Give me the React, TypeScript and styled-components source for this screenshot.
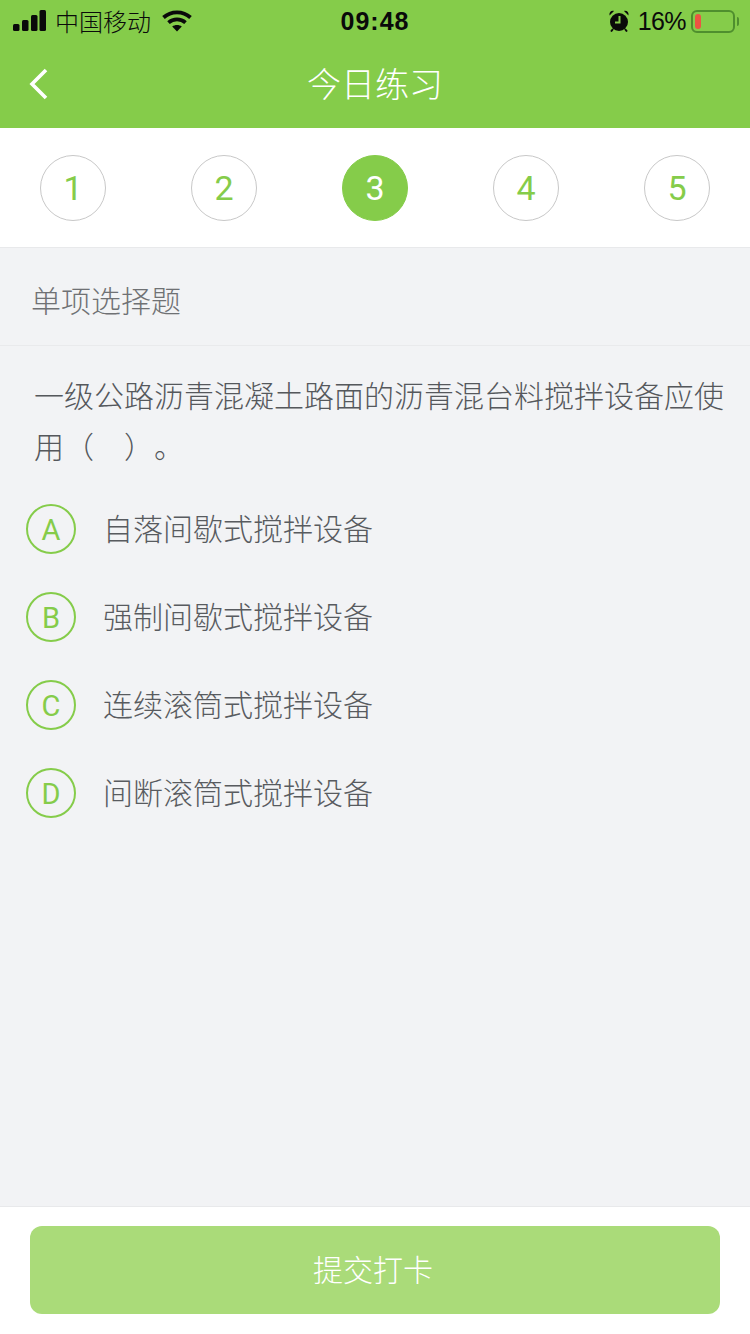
import React from "react";
import styled, { createGlobalStyle } from "styled-components";

const GREEN = "#85cc4a";
const CJK = `"Noto Sans CJK SC", "Liberation Sans", sans-serif`;
const LATIN = `Roboto, "Liberation Sans", sans-serif`;

const GlobalStyle = createGlobalStyle`
  html, body { margin: 0; padding: 0; }
  body { font-family: ${CJK}; background: #f2f3f5; text-spacing-trim: space-all; }
  * { box-sizing: border-box; }
`;

const Page = styled.div`
  width: 750px;
  height: 1334px;
  display: flex;
  flex-direction: column;
  background: #f2f3f5;
  overflow: hidden;
`;

const Header = styled.header`
  background: ${GREEN};
  height: 128px;
  flex: none;
`;

const StatusBar = styled.div`
  height: 40px;
  padding: 2px 12px 0 13px;
  display: grid;
  grid-template-columns: 1fr auto 1fr;
  align-items: center;
  color: #0a0a0a;
`;

const StatusLeft = styled.div`
  display: flex;
  align-items: center;
`;

const StatusRight = styled.div`
  display: flex;
  align-items: center;
  justify-content: flex-end;
`;

const Carrier = styled.span`
  font-size: 24px;
  line-height: 30px;
  font-weight: 300;
  margin: 0 11px 0 8px;
`;

const Clock = styled.span`
  font-family: "Liberation Sans", sans-serif;
  font-size: 25px;
  font-weight: 700;
  letter-spacing: 1px;
  margin-left: -1px;
`;

const Percent = styled.span`
  font-family: "Liberation Sans", sans-serif;
  font-size: 25px;
  margin: 0 5px 0 9px;
  letter-spacing: -0.6px;
`;

const Battery = styled.div`
  position: relative;
  width: 44px;
  height: 23px;
  border: 2px solid #4f8f2e;
  border-radius: 6px;
  padding: 2px;
  margin-right: 3px;

  &::after {
    content: "";
    position: absolute;
    right: -6px;
    top: 5px;
    width: 2px;
    height: 9px;
    border-radius: 0 2px 2px 0;
    background: #4f8f2e;
  }
`;

const BatteryLevel = styled.div`
  width: 6px;
  height: 100%;
  border-radius: 3px;
  background: #ec5442;
`;

const NavBar = styled.nav`
  position: relative;
  height: 88px;
  display: flex;
  align-items: center;
  justify-content: center;
  padding-bottom: 2px;
`;

const BackButton = styled.button`
  position: absolute;
  left: 28px;
  top: 27px;
  width: 22px;
  height: 34px;
  padding: 0;
  border: 0;
  background: none;
  display: flex;
`;

const NavTitle = styled.h1`
  margin: 0;
  color: #fff;
  font-size: 34px;
  font-weight: 300;
  line-height: 44px;
`;

const Steps = styled.div`
  flex: none;
  height: 120px;
  padding: 27px 40px 0;
  display: flex;
  justify-content: space-between;
  align-items: flex-start;
  background: #fff;
  border-bottom: 1px solid #e8e9eb;
`;

const Step = styled.div<{ $active?: boolean }>`
  width: 66px;
  height: 66px;
  border-radius: 50%;
  display: flex;
  align-items: center;
  justify-content: center;
  font-family: ${LATIN};
  font-weight: 400;
  font-size: 34px;
  color: ${(p) => (p.$active ? "#fff" : GREEN)};
  background: ${(p) => (p.$active ? GREEN : "#fff")};
  border: 1px solid ${(p) => (p.$active ? GREEN : "#c8c8c8")};
`;

const TypeRow = styled.div`
  flex: none;
  height: 98px;
  padding: 4px 31px 0;
  display: flex;
  align-items: center;
  font-size: 30px;
  font-weight: 300;
  color: #6f7174;
  border-bottom: 1px solid #e9eaec;
`;

const Question = styled.p`
  margin: 0;
  padding: 23px 20px 0 34px;
  font-size: 30px;
  font-weight: 300;
  line-height: 51px;
  color: #55585c;
`;

const OptionList = styled.div`
  flex: 1;
  padding: 33px 0 0 26px;
  display: flex;
  flex-direction: column;
  gap: 38px;
`;

const Option = styled.div`
  display: flex;
  align-items: center;
  height: 50px;
`;

const OptionMark = styled.span`
  flex: none;
  width: 50px;
  height: 50px;
  padding-top: 2px;
  border-radius: 50%;
  border: 2px solid ${GREEN};
  display: flex;
  align-items: center;
  justify-content: center;
  font-family: ${LATIN};
  font-weight: 400;
  font-size: 29px;
  color: ${GREEN};
`;

const OptionText = styled.span`
  margin-left: 27px;
  padding-bottom: 4px;
  font-size: 30px;
  font-weight: 300;
  color: #585b5f;
`;

const Footer = styled.footer`
  flex: none;
  height: 128px;
  padding: 19px 30px 0;
  background: #fff;
  border-top: 1px solid #e8e9eb;
`;

const SubmitButton = styled.button`
  width: 100%;
  height: 88px;
  padding: 0 4px 4px 0;
  border: 0;
  border-radius: 12px;
  background: #aadb79;
  color: #fff;
  font-family: ${CJK};
  font-size: 30px;
  font-weight: 300;
`;

const Cellular = () => (
  <svg width="34" height="22" viewBox="0 0 34 22" fill="#0a0a0a">
    <rect x="0" y="14" width="6.500" height="7" rx="1.500" />
    <rect x="9" y="10" width="6.500" height="11" rx="1.500" />
    <rect x="18" y="5" width="6.500" height="16" rx="1.500" />
    <rect x="26.500" y="0" width="6.500" height="21" rx="1.500" />
  </svg>
);

const Wifi = () => (
  <svg width="30" height="22" viewBox="0 0 30 22" fill="none" stroke="#0a0a0a" strokeWidth="3.800">
    <path d="M1.500 7.500C9 .6 21 .6 28.500 7.500" />
    <path d="M6.500 12.600c4.800-4.200 12.200-4.200 17 0" />
    <path d="M15 21.500l-4.800-5c2.700-2 6.900-2 9.600 0z" fill="#0a0a0a" stroke="none" />
  </svg>
);

const AlarmClock = () => (
  <svg width="20" height="22" viewBox="0 0 20 22">
    <circle cx="10" cy="12" r="9" fill="#0a0a0a" />
    <path d="M.5 5.500C0 2.500 2 .3 5 1zM19.500 5.500c.5-3-1.500-5.200-4.500-4.500z" fill="#0a0a0a" />
    <path d="M4 19l-2 2.500M16 19l2 2.500" stroke="#0a0a0a" strokeWidth="2" />
    <path d="M10.500 6v6.500H6" stroke="#85cc4a" strokeWidth="2" fill="none" />
  </svg>
);

const steps = [1, 2, 3, 4, 5];
const options = [
  { key: "A", text: "自落间歇式搅拌设备" },
  { key: "B", text: "强制间歇式搅拌设备" },
  { key: "C", text: "连续滚筒式搅拌设备" },
  { key: "D", text: "间断滚筒式搅拌设备" },
];

export default function App() {
  return (
    <Page>
      <GlobalStyle />
      <Header>
        <StatusBar>
          <StatusLeft>
            <Cellular />
            <Carrier>中国移动</Carrier>
            <Wifi />
          </StatusLeft>
          <Clock>09:48</Clock>
          <StatusRight>
            <AlarmClock />
            <Percent>16%</Percent>
            <Battery>
              <BatteryLevel />
            </Battery>
          </StatusRight>
        </StatusBar>
        <NavBar>
          <BackButton aria-label="返回">
            <svg width="22" height="34" viewBox="0 0 22 34" fill="none" stroke="#fff" strokeWidth="3.600">
              <path d="M18 3 4 17l14 14" />
            </svg>
          </BackButton>
          <NavTitle>今日练习</NavTitle>
        </NavBar>
      </Header>
      <Steps>
        {steps.map((n) => (
          <Step key={n} $active={n === 3}>
            {n}
          </Step>
        ))}
      </Steps>
      <TypeRow>单项选择题</TypeRow>
      <Question>一级公路沥青混凝土路面的沥青混台料搅拌设备应使用（　）。</Question>
      <OptionList>
        {options.map((o) => (
          <Option key={o.key}>
            <OptionMark>{o.key}</OptionMark>
            <OptionText>{o.text}</OptionText>
          </Option>
        ))}
      </OptionList>
      <Footer>
        <SubmitButton>提交打卡</SubmitButton>
      </Footer>
    </Page>
  );
}
